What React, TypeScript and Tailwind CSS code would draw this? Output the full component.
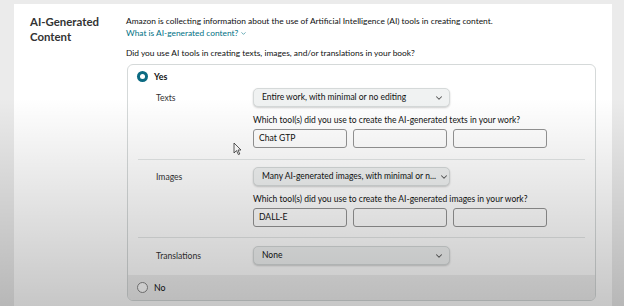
import { ChevronDown } from 'lucide-react'

function Select({ value }: { value: string }) {
    return (
        <div className="flex h-[19px] w-[197px] items-center justify-between rounded-[5px] border border-[#d5d9d9] bg-[#f0f2f2] pl-[8px] pr-[5px] shadow-[0_1px_2px_rgba(15,17,17,0.2)]">
            <span className="whitespace-nowrap text-[8.5px] text-[#0f1111]">{value}</span>
            <ChevronDown size={10} strokeWidth={2.5} className="ml-[3px] shrink-0 text-[#555]" />
        </div>
    )
}

function ToolInputs({ first }: { first?: string }) {
    return (
        <div className="flex gap-[6px]">
            {[first ?? '', '', ''].map((v, i) => (
                <div
                    key={i}
                    className="flex h-[19px] w-[94px] items-center rounded-[3px] border border-[#949494] bg-white px-[5px] text-[8.6px] text-[#0f1111]"
                >
                    {v}
                </div>
            ))}
        </div>
    )
}

function Row({
    label,
    value,
    question,
    first,
}: {
    label: string
    value: string
    question?: string
    first?: string
}) {
    return (
        <div className="flex">
            <div className="w-[125px] shrink-0 pl-[28px] pt-[4px] text-[8.6px] text-[#333]">
                {label}
            </div>
            <div className="flex flex-col">
                <Select value={value} />
                {question && (
                    <>
                        <p className="mt-[7px] text-[8.5px] leading-[12px] text-[#0f1111]">
                            {question}
                        </p>
                        <div className="mt-[3px]">
                            <ToolInputs first={first} />
                        </div>
                    </>
                )}
            </div>
        </div>
    )
}

export default function App() {
    return (
        <div className="relative flex h-[306px] w-[624px] overflow-hidden bg-[#ebebeb] font-['Lato',sans-serif]">
            <div className="ml-[14px] mt-[4px] flex w-[598px] bg-white">
                <div className="w-[112px] shrink-0 pl-[16px] pt-[10px]">
                    <h2 className="text-[11.4px] font-bold leading-[15px] text-[#333]">
                        AI-Generated
                        <br />
                        Content
                    </h2>
                </div>
                <div className="flex flex-col pt-[11px]">
                    <p className="text-[8.4px] leading-[12px] text-[#0f1111]">
                        Amazon is collecting information about the use of
                        Artificial Intelligence (AI) tools in creating content.
                    </p>
                    <p className="flex items-center gap-[2px] text-[8.4px] leading-[12px] text-[#007185]">
                        What is AI-generated content?
                        <ChevronDown size={7} strokeWidth={2} />
                    </p>
                    <p className="mt-[8px] text-[8.4px] leading-[12px] text-[#0f1111]">
                        Did you use AI tools in creating texts, images, and/or
                        translations in your book?
                    </p>
                    <div className="ml-px mt-[5px] flex w-[469px] flex-col overflow-hidden rounded-[6px] border border-[#d5d9d9]">
                        <div className="mt-[5px] flex h-[13px] items-center gap-[6px] pl-[9px]">
                            <span className="flex h-[11px] w-[11px] items-center justify-center rounded-full bg-[#0b6a82]">
                                <span className="h-[5px] w-[5px] rounded-full bg-white" />
                            </span>
                            <span className="text-[8.8px] font-bold text-[#0f1111]">
                                Yes
                            </span>
                        </div>
                        <div className="mt-[5px]">
                            <Row
                                label="Texts"
                                value="Entire work, with minimal or no editing"
                                question="Which tool(s) did you use to create the AI-generated texts in your work?"
                                first="Chat GTP"
                            />
                        </div>
                        <div className="mx-[10px] mt-[11px] border-t border-[#e3e6e6]" />
                        <div className="mt-[7px]">
                            <Row
                                label="Images"
                                value="Many AI-generated images, with minimal or n..."
                                question="Which tool(s) did you use to create the AI-generated images in your work?"
                                first="DALL-E"
                            />
                        </div>
                        <div className="mx-[10px] mt-[10px] border-t border-[#e3e6e6]" />
                        <div className="mt-[8px]">
                            <Row label="Translations" value="None" />
                        </div>
                        <div className="mt-[10px] flex h-[25px] items-center gap-[6px] bg-[#f0f0f0] pl-[9px]">
                            <span className="h-[11px] w-[11px] rounded-full border border-[#888] bg-white" />
                            <span className="text-[8.8px] text-[#0f1111]">No</span>
                        </div>
                    </div>
                </div>
            </div>
            <svg
                className="absolute left-[233px] top-[142px]"
                width="9"
                height="14"
                viewBox="0 0 9 14"
            >
                <path
                    d="M1 1 L1 11 L3.5 8.6 L5.4 12.6 L6.8 12 L5 8 L8 8 Z"
                    fill="white"
                    stroke="#333"
                    strokeWidth="0.8"
                />
            </svg>
            <div className="pointer-events-none absolute inset-0 bg-linear-to-b from-transparent from-[32%] to-black/22" />
        </div>
    )
}
